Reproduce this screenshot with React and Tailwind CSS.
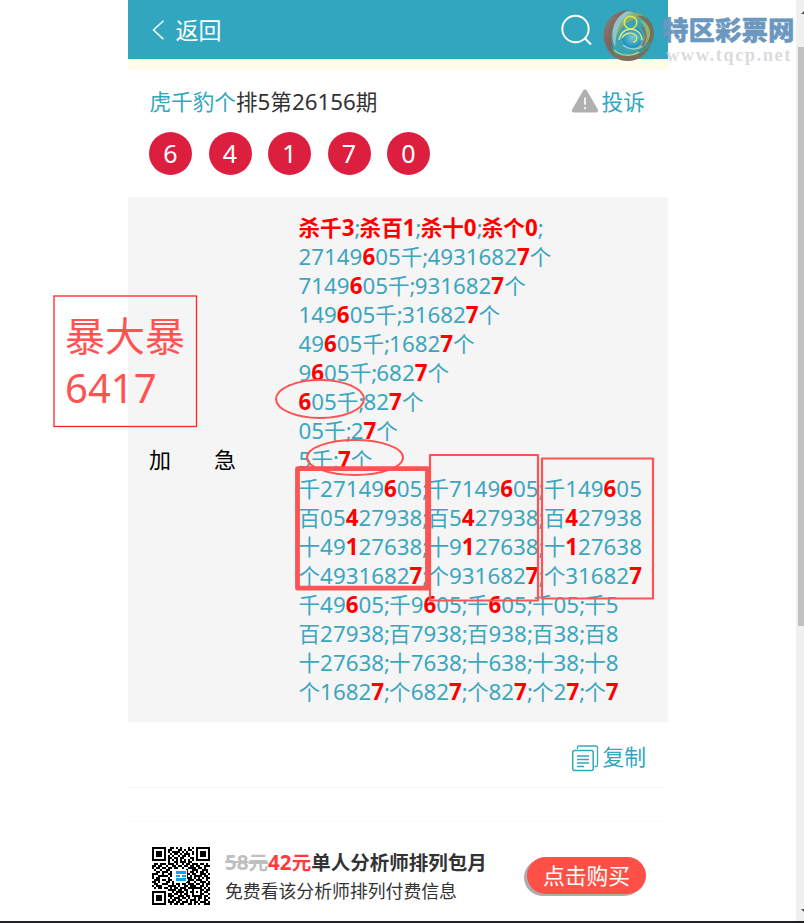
import React from "react";

const LINES = [
  "*杀千3*;*杀百1*;*杀十0*;*杀个0*;",
  "27149*6*05千;4931682*7*个",
  "7149*6*05千;931682*7*个",
  "149*6*05千;31682*7*个",
  "49*6*05千;1682*7*个",
  "9*6*05千;682*7*个",
  "*6*05千;82*7*个",
  "05千;2*7*个",
  "5千;*7*个",
  "千27149*6*05;千7149*6*05;千149*6*05",
  "百05*4*27938;百5*4*27938;百*4*27938",
  "十49*1*27638;十9*1*27638;十*1*27638",
  "个4931682*7*;个931682*7*;个31682*7*",
  "千49*6*05;千9*6*05;千*6*05;千05;千5",
  "百27938;百7938;百938;百38;百8",
  "十27638;十7638;十638;十38;十8",
  "个1682*7*;个682*7*;个82*7*;个2*7*;个*7*",
];

// Digits, semicolons and Chinese characters each have their own metrics.
function Runs({ text }) {
  return text.match(/\d+|;|[^\d;]+/g).map((run, i) => {
    if (/\d/.test(run)) return <span key={i}>{run}</span>;
    if (run === ";") return <span key={i} className="tracking-[-0.9px]">;</span>;
    return <span key={i} className="text-[21.6px]">{run}</span>;
  });
}

function Line({ text }) {
  return (
    <div className="h-[29px] leading-[29px] whitespace-nowrap">
      {text.split("*").map((part, i) =>
        part === "" ? null : i % 2 ? (
          <b key={i} className="font-bold text-[#ff0000]"><Runs text={part} /></b>
        ) : (
          <Runs key={i} text={part} />
        )
      )}
    </div>
  );
}

const QR = [
  "11111110011010100010101111111",
  "10000010110001101011001000001",
  "10111010101111010100101011101",
  "10111010010110101110101011101",
  "10111010101001011010001011101",
  "10000010110110110001101000001",
  "11111110101010101010101111111",
  "00000000100110111011000000000",
  "01101110111010010110111011010",
  "11011001001101101101101100111",
  "10110110110110010011110110100",
  "01001001100000000100111001110",
  "00110111010000000101101011010",
  "11100100110000000110110011101",
  "10011111010000000101011110110",
  "10110000100000000111010101011",
  "01110110110000000011101110010",
  "11010001101000000110010011101",
  "01100111001011011011101101011",
  "10111000111101001101110011010",
  "01011011010110111011111110101",
  "00000000111101101100100011011",
  "11111110001011110101101010110",
  "10000010110110101100100011001",
  "10111010111001110110111110110",
  "10111010010111011010010110101",
  "10111010101101100101110100110",
  "10000010111011011101011011101",
  "11111110010110110011010100111",
];

function QrCode() {
  return (
    <svg className="block h-[58px] w-[58px]" viewBox="0 0 29 29" shapeRendering="crispEdges">
      {QR.flatMap((row, y) =>
        [...row].map((c, x) => (c === "1" ? <rect key={`${x}-${y}`} x={x} y={y} width="1" height="1" fill="#000" /> : null))
      )}
      <rect x="11.500" y="11.500" width="6" height="6" fill="#fff" />
      <path d="M12 12h5v1.500h-5zM12 15.500h5V17h-5zM12 14h2v1h-2zM15 14h2v1h-2z" fill="#18a0e8" />
    </svg>
  );
}

function Swirl() {
  return (
    <svg className="block h-[54px] w-[54px]" viewBox="0 0 54 54" fill="none">
      <defs>
        <linearGradient id="rim" x1="0" y1="0" x2="1" y2="1">
          <stop offset="0" stopColor="#6f9390" />
          <stop offset=".35" stopColor="#86685f" />
          <stop offset=".7" stopColor="#6f5c50" />
          <stop offset="1" stopColor="#b9826a" />
        </linearGradient>
        <linearGradient id="olive" x1="0" y1="0" x2="1" y2="1">
          <stop offset="0" stopColor="#9fc08c" />
          <stop offset=".5" stopColor="#7fa468" />
          <stop offset="1" stopColor="#766c63" />
        </linearGradient>
        <radialGradient id="core">
          <stop offset="0" stopColor="#7cc9c6" />
          <stop offset="1" stopColor="#1690c6" />
        </radialGradient>
      </defs>
      <circle cx="26.500" cy="27" r="25" fill="#3da3ae" />
      {/* outer brown blade */}
      <path d="M20 3C9 6 1.500 16 1.500 27c0 11 7 20 16 23-5-6-8-12-8-20C9.500 18 15 8 27 2.500 24 2 22 2.400 20 3z" fill="url(#rim)" />
      {/* pale blade inside it */}
      <path d="M24 3.500C14 9 10 18 10.500 29c.3 4 1 7 3 10 0-15 4-26 19-33.500C30 4 27 3 24 3.500z" fill="#8fc5cb" />
      <path d="M29 5C20 10 15 18 14 31c4-11 9-18 21-20 6-1 10 1 13 4C44 8 37 4 29 5z" fill="url(#olive)" />
      {/* right olive blade */}
      <path d="M35 8c9 3 13 12 11 21-1 8-7 14-15 16 11 1 21-8 21-20C52 14 44 6 35 8z" fill="#71725b" />
      <path d="M36 12c7 4 9 11 6 18-2 6-7 10-13 11 10 2 18-5 19-14 .8-7-4-15-12-15z" fill="#93b570" />
      {/* lower blades */}
      <path d="M8 36c5 9 15 13 25 9 7-2 12-7 15-13 0 11-9 20-21 20C17 52 10 45 8 36z" fill="#2f9f9c" />
      <path d="M4 37c5 8 13 12 22 11 9 0 17-4 23-13-3 11-12 18-23 18S7 47 4 37z" fill="#806b5c" />
      <path d="M12 42c7 6 17 7 25 2" stroke="#a5d583" strokeWidth="1.500" />
      <circle cx="30.500" cy="29.500" r="10.500" fill="url(#core)" />
      <path d="M17 31c5-7 13-8 20-2 3 3 5 6 5 9" stroke="#4aaec5" strokeWidth="3" />
      <path d="M21 37c6 5 14 5 20 1" stroke="#8fd2df" strokeWidth="1.500" />
      <path d="M40 19c5 5 5 13 0 19" stroke="#9b5445" strokeWidth="2.200" opacity=".65" />
      {/* yellow figure */}
      <circle cx="28.500" cy="14.500" r="6.300" stroke="#dfe85a" strokeWidth="1.600" />
      <path d="M17 32c1-7 5-10 11-11 7 0 12 5 12 11M20 30c3-5 10-7 14-2 2 3 0 6-3 6" stroke="#dfe87a" strokeWidth="1.400" />
    </svg>
  );
}

function Annotations() {
  return (
    <svg className="absolute left-0 top-0 h-[923px] w-[804px]" viewBox="0 0 804 923" fill="none" stroke="#ff5252">
      <rect x="54" y="296" width="142.500" height="130.500" stroke="#ff2424" strokeWidth="1.300" />
      <ellipse cx="320" cy="399" rx="44" ry="19" strokeWidth="2" />
      <ellipse cx="355" cy="457.500" rx="48" ry="17.500" strokeWidth="2" />
      <rect x="297.500" y="468.700" width="130" height="119.500" strokeWidth="4.800" strokeLinejoin="round" />
      <rect x="430" y="455" width="108" height="145.500" strokeWidth="2.200" strokeLinejoin="round" />
      <rect x="542" y="458.500" width="111" height="140" strokeWidth="2.200" strokeLinejoin="round" />
    </svg>
  );
}

export default function App() {
  return (
    <div className="relative h-[923px] w-[804px] overflow-hidden bg-white font-['Noto_Sans','Noto_Sans_CJK_SC',sans-serif] text-[22.350px]">
      <div className="flex h-[921px]">
        <main className="ml-[128px] flex w-[540px] flex-col">
          <header className="flex h-[59px] shrink-0 items-center bg-[#33a6bf] pl-[24px] pr-[76px] text-white">
            <svg className="h-[20px] w-[13px]" viewBox="0 0 13 20" fill="none" stroke="currentColor" strokeWidth="1.500"><path d="M11.500 .8 1.500 10l10 9.200" /></svg>
            <span className="ml-[10.500px] text-[23px] leading-[30px]">返回</span>
            <svg className="ml-auto h-[32px] w-[32px]" viewBox="0 0 32 32" fill="none" stroke="currentColor" strokeWidth="1.900"><circle cx="15.500" cy="15" r="13.200" /><path d="m25 24.500 6 6" /></svg>
          </header>
          <div className="h-[10.500px] shrink-0 bg-[#fffdea]" />
          <section className="h-[127.500px] shrink-0 pl-[21.500px] pr-[23px] pt-[17px]">
            <div className="flex h-[30px] items-center leading-[30px] text-[#333]">
              <span className="text-[21.6px] text-[#33a6bf]">虎千豹个</span>
              <span><Runs text="排5第26156期" /></span>
              <svg className="ml-auto -mt-[2px] h-[24px] w-[28px]" viewBox="0 0 28 24"><path d="M14 .5c1 0 1.600.6 2.100 1.400l10.800 18.700c.8 1.400.1 2.900-1.600 2.900H2.700c-1.700 0-2.400-1.500-1.600-2.900L11.900 1.900C12.400 1.100 13 .5 14 .5z" fill="#b0b0b0" /><path d="M14 8.500v7.200M14 18v2.200" stroke="#fff" strokeWidth="1.600" /></svg>
              <span className="ml-[2px] text-[21.8px] text-[#33a6bf]">投诉</span>
            </div>
            <div className="mt-[15px] -ml-[.5px] flex gap-[16.500px]">
              {[6, 4, 1, 7, 0].map((n) => (
                <span key={n} className="flex h-[43px] w-[43px] items-center justify-center rounded-full bg-[#dc1f3e] text-[25px] leading-none text-white">{n}</span>
              ))}
            </div>
          </section>
          <section className="flex h-[525px] shrink-0 items-center bg-[#f5f5f5] pl-[21px]">
            <div className="flex w-[149.500px] gap-[43px] text-[22px] text-black"><span>加</span><span>急</span></div>
            <div className="text-[#3ba6bf]">{LINES.map((l) => <Line key={l} text={l} />)}</div>
          </section>
          <div className="flex h-[66px] shrink-0 items-center justify-end border-b border-[#f8f8f8] pr-[22px] pt-[6px] text-[#33a6bf]">
            <svg className="mt-px h-[27px] w-[28px]" viewBox="0 0 28 27" fill="none" stroke="currentColor"><path d="M6.500 4V2.500C6.500 1.500 7 1 8 1H25c1 0 1.500.5 1.500 1.500V20c0 1-.5 1.500-1.500 1.500h-1.500" strokeWidth="1.300" /><rect x="1.700" y="5.500" width="20.500" height="20" rx="2" strokeWidth="1.500" /><path d="M6 11h12M6 14.500h12M6 18h12M6 21.500h7" strokeWidth="1.500" /></svg>
            <span className="ml-[3px] -mt-[2px] text-[21.8px] leading-[30px]">复制</span>
          </div>
          <div className="h-[34px] shrink-0 border-b border-[#fafafa]" />
          <footer className="flex h-[99px] shrink-0 pl-[24px] pr-[22px] pt-[25px]">
            <QrCode />
            <div className="ml-[15px] whitespace-nowrap text-[#333]">
              <div className="h-[29px] text-[19.500px] font-bold leading-[30px]">
                <span className="text-[#bfbfbf] line-through decoration-2"><span className="text-[20.600px]">58</span>元</span>
                <span className="text-[#ff3b3b]"><span className="text-[20.600px]">42</span>元</span>单人分析师排列包月
              </div>
              <div className="text-[17.850px] leading-[30px]">免费看该分析师排列付费信息</div>
            </div>
            <button className="ml-auto mt-[10px] h-[37px] w-[119px] rounded-full bg-[#ff5047] text-[21.8px] leading-[37px] text-white shadow-[-3px_2px_0_#adadad]">点击购买</button>
          </footer>
        </main>
        <aside className="ml-auto h-full w-[8px] bg-[#f0f0f0] pl-[2px] pt-[47px]"><div className="h-[579px] bg-[#c1c1c1]" /></aside>
      </div>
      <div className="h-[2px] bg-[#211f2b]" />

      <div className="absolute left-[602px] top-[8px]"><Swirl /></div>
      <div className="absolute left-[662px] top-[16px] whitespace-nowrap text-[26.500px] font-black leading-[28px] text-[#6c98bf] [-webkit-text-stroke:0.4px_#6c98bf]">特区彩票网</div>
      <div className="absolute left-[666px] top-[45px] whitespace-nowrap font-['Liberation_Serif',serif] text-[18.500px] font-bold leading-[20px] tracking-[1.500px] text-[#d0d2d6]/80">www.tqcp.net</div>
      <svg className="absolute left-[801px] top-[11px] h-[3px] w-[3px]" viewBox="0 0 3 3"><path d="M0 3 3 0v3z" fill="#505050" /></svg>
      <svg className="absolute left-[801px] top-[909px] h-[3px] w-[3px]" viewBox="0 0 3 3"><path d="M0 0h3v3z" fill="#505050" /></svg>
      <Annotations />
      <div className="absolute left-[65px] top-[310px] text-[40px] leading-[52px] text-[#ff5252]">暴大暴<br />6417</div>
    </div>
  );
}
